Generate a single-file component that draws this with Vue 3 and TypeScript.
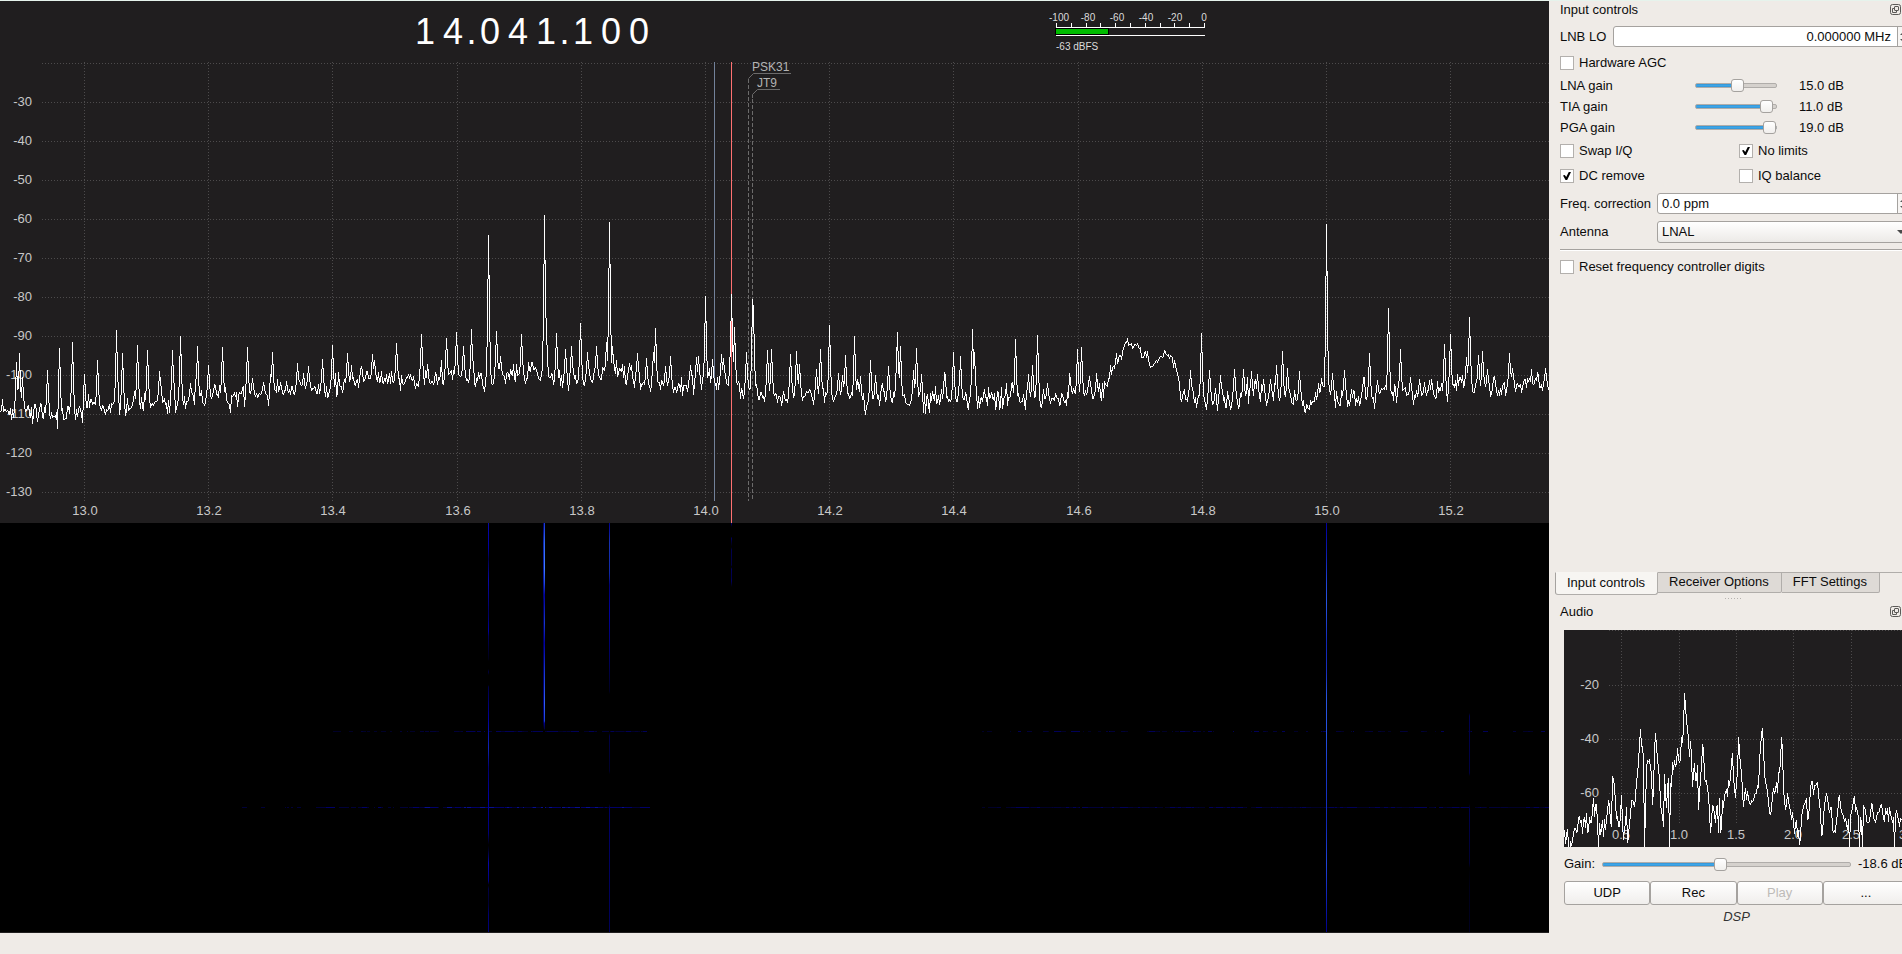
<script setup lang="ts">
import { ref } from 'vue'

type Point = [number, number]

const digits = '14.041.100'.split('')
const meterTicks = Array.from({ length: 11 }, (_, i) => Math.round(i * 14.8))
const meterLabels = [-100, -80, -60, -40, -20, 0]

/* Repeatable noise, so that the traces look the same on each load. */
function makeRandom(seed: number) {
  let s = seed
  return () => {
    s = (s * 1664525 + 1013904223) % 4294967296
    return s / 4294967296
  }
}

function interpolate(points: Point[], x: number): number {
  for (let i = 1; i < points.length; i++) {
    const [x1, y1] = points[i]
    if (x <= x1) {
      const [x0, y0] = points[i - 1]
      return y0 + ((x - x0) / (x1 - x0)) * (y1 - y0)
    }
  }
  return points[points.length - 1][1]
}

/* One vertical run per column, joining each sample to the next. */
function columns(ys: number[]): string {
  let path = ''
  for (let x = 0; x < ys.length; x++) {
    const previous = ys[x - 1] ?? ys[x]
    const next = ys[x + 1] ?? ys[x]
    const a = (previous + ys[x]) / 2
    const b = (next + ys[x]) / 2
    const top = Math.round(Math.min(a, b, ys[x]))
    const bottom = Math.max(top + 1, Math.round(Math.max(a, b, ys[x])))
    path += `M${x + 0.5} ${top}V${bottom}`
  }
  return path
}

const floorLine: Point[] = [
  [0, 632], [100, 640], [170, 650], [240, 636], [300, 622], [380, 622], [450, 608], [500, 608], [600, 602], [640, 588],
  [700, 590], [760, 584], [850, 578], [930, 570], [980, 574], [1020, 568], [1060, 542], [1200, 545], [1300, 540],
  [1380, 530], [1420, 550], [1520, 528], [1620, 530], [1650, 545], [1760, 540], [1850, 520], [1900, 530], [1930, 558],
  [2020, 565], [2080, 552], [2140, 555], [2190, 542], [2220, 575], [2270, 580], [2340, 590], [2420, 590], [2500, 588],
  [2550, 595], [2590, 612], [2650, 596], [2710, 600], [2770, 610], [2820, 600], [2900, 604], [3050, 604], [3220, 596],
  [3270, 575], [3320, 568], [3335, 500], [3360, 468], [3375, 432], [3400, 438], [3440, 460], [3450, 510], [3475, 475],
  [3490, 460], [3530, 500], [3540, 570], [3560, 598], [3650, 600], [3750, 594], [3850, 594], [3890, 604], [3955, 604],
  [3970, 588], [4010, 590], [4090, 598], [4190, 580], [4250, 594], [4310, 590], [4340, 580], [4360, 558], [4400, 558],
  [4470, 572], [4510, 572], [4540, 552], [4647, 558],
]

const peaks: Point[] = [
  [49, 487], [56, 460], [67, 530], [142, 511], [178, 445], [217, 427], [253, 522], [274, 598], [292, 481], [347, 391],
  [367, 460], [403, 574], [412, 436], [442, 451], [478, 514], [517, 451], [541, 409], [571, 550], [592, 439], [625, 496],
  [643, 553], [667, 442], [742, 442], [757, 535], [790, 547], [817, 457], [840, 547], [892, 490], [910, 520], [925, 499],
  [965, 478], [997, 436], [1040, 460], [1115, 463], [1123, 481], [1189, 430], [1264, 403], [1339, 415], [1369, 397],
  [1390, 439], [1414, 388], [1465, 105], [1489, 394], [1501, 469], [1564, 403], [1595, 487], [1633, 45], [1639, 394],
  [1669, 400], [1696, 448], [1714, 439], [1741, 370], [1762, 457], [1789, 439], [1819, 427], [1828, 67], [1837, 439],
  [1888, 490], [1912, 460], [1939, 475], [1960, 457], [1966, 385], [1996, 499], [2011, 469], [2071, 495], [2089, 472],
  [2095, 469], [2116, 289], [2137, 478], [2164, 463], [2170, 475], [2194, 283], [2203, 382], [2239, 457], [2255, 297],
  [2260, 334], [2302, 451], [2314, 448], [2371, 463], [2389, 454], [2398, 493], [2449, 508], [2461, 448], [2488, 376],
  [2515, 520], [2527, 526], [2536, 466], [2563, 409], [2572, 538], [2581, 529], [2611, 481], [2626, 526], [2647, 550],
  [2665, 499], [2687, 487], [2692, 397], [2701, 439], [2740, 511], [2749, 445], [2762, 523], [2833, 517], [2860, 457],
  [2881, 469], [2917, 388], [2923, 457], [3035, 547], [3046, 418], [3085, 523], [3097, 496], [3112, 406], [3142, 550],
  [3211, 544], [3232, 448], [3244, 442], [3268, 529], [3571, 511], [3604, 400], [3628, 511], [3661, 526], [3703, 508],
  [3730, 508], [3754, 514], [3772, 523], [3790, 538], [3811, 538], [3829, 496], [3847, 454], [3862, 505], [3898, 514],
  [3955, 550], [3964, 535], [3979, 72], [3997, 520], [4033, 511], [4090, 532], [4108, 460], [4132, 541], [4165, 325],
  [4201, 448], [4231, 532], [4258, 538], [4273, 547], [4294, 538], [4333, 433], [4351, 403], [4399, 472], [4408, 352],
  [4435, 466], [4447, 454], [4462, 508], [4483, 529], [4528, 460], [4537, 505], [4588, 535], [4605, 535], [4634, 505],
]

const dips: Point[] = [
  [112, 667], [172, 686], [247, 670], [376, 648], [508, 640], [526, 640], [691, 640], [2770, 640], [2788, 640], [3652, 632],
]

function buildSpectrum(): string {
  const random = makeRandom(41)
  const ys: number[] = []
  for (let x = 0; x < 1549; x++) {
    const onHump = x > 1110 && x < 1180
    const spread = onHump ? 26 : 38
    let offset = (random() + random() - 1) * spread
    if (!onHump && random() > 0.88) offset -= random() * 44
    ys.push(interpolate(floorLine, x * 3) + offset)
  }
  for (const [px, py] of peaks) {
    const x = Math.round(px / 3)
    const rise = interpolate(floorLine, px) - py
    for (const [dx, share] of [[-1, 0.4], [1, 0.45], [-2, 0.06], [2, 0.08]]) {
      if (ys[x + dx] !== undefined) ys[x + dx] = Math.min(ys[x + dx], py + rise * (1 - share))
    }
    ys[x] = py
  }
  for (const [px, py] of dips) ys[Math.round(px / 3)] = py
  return columns(ys.map((y) => 138 + y / 3))
}
const spectrum = buildSpectrum()

const levelLines = Array.from({ length: 12 }, (_, i) => ({ y: 1 + i * 39, label: -20 - i * 10 }))
const bandLines = Array.from({ length: 12 }, (_, i) => ({ x: 84 + Math.round(i * 124.2), label: (13 + i * 0.2).toFixed(1) }))

/* Audio envelope, also in thirds. */
const audioEnvelope: Point[] = [
  [0, 600], [13, 645], [28, 610], [48, 580], [78, 580], [96, 525], [99, 580], [101, 650], [104, 580], [123, 600],
  [131, 510], [140, 590], [145, 437], [153, 520], [163, 590], [172, 495], [176, 630], [185, 530], [190, 638], [196, 570],
  [203, 510], [210, 530], [215, 450], [220, 440], [228, 297], [236, 390], [239, 540], [241, 650], [243, 540], [245, 415],
  [256, 388], [260, 430], [263, 525], [274, 310], [283, 420], [290, 550], [296, 590], [299, 635], [301, 433], [306, 535],
  [313, 445], [316, 650], [319, 460], [331, 390], [336, 400], [340, 355], [346, 400], [351, 320], [355, 340], [361, 190],
  [368, 290], [373, 335], [376, 380], [379, 333], [385, 470], [389, 400], [394, 450], [398, 405], [403, 540], [410, 410],
  [415, 343], [421, 440], [428, 480], [436, 550], [439, 608], [445, 525], [452, 580], [458, 525], [461, 610], [466, 505],
  [469, 610], [475, 510], [488, 500], [498, 440], [504, 368], [508, 450], [514, 505], [523, 320], [528, 410], [538, 530],
  [544, 475], [558, 525], [573, 490], [583, 475], [588, 350], [595, 293], [600, 430], [608, 490], [618, 555], [628, 475],
  [638, 490], [646, 430], [652, 322], [657, 480], [663, 540], [668, 490], [678, 540], [688, 580], [696, 570], [698, 620],
  [708, 620], [711, 560], [725, 505], [728, 570], [742, 452], [748, 495], [755, 460], [763, 490], [773, 610], [780, 530],
  [787, 490], [793, 530], [813, 610], [823, 505], [833, 550], [846, 580], [854, 580], [856, 650], [859, 560], [871, 497],
  [878, 550], [883, 560], [886, 650], [889, 560], [893, 650], [898, 525], [913, 580], [923, 525], [933, 580], [950, 522],
  [958, 565], [978, 555], [988, 560], [991, 650], [994, 560], [1010, 570], [1020, 560], [1035, 570],
]

function buildAudio(): string {
  const random = makeRandom(7)
  const ys: number[] = []
  for (let x = 0; x < 345; x++) {
    const spread = x < 30 ? 60 : 40
    ys.push(interpolate(audioEnvelope, x * 3) + (random() + random() - 1) * spread)
  }
  for (const [px, py] of audioEnvelope) {
    const x = Math.round(px / 3)
    if (x < ys.length) ys[x] = py
  }
  return columns(ys.map((y) => y / 3))
}
const audioTrace = buildAudio()
const audioLevels = [{ y: 0, label: '' }, { y: 55, label: '-20' }, { y: 109, label: '-40' }, { y: 163, label: '-60' }]
const audioFreqs = [
  { x: 57, label: '0.5' }, { x: 115, label: '1.0' }, { x: 172, label: '1.5' },
  { x: 229, label: '2.0' }, { x: 287, label: '2.5' }, { x: 344, label: '3.0' },
]

/* Waterfall carriers: [y, colour] stops down each column. */
const carriers: { id: string; x: number; stops: [number, string][] }[] = [
  { id: 'c1', x: 488, stops: [[0, '#0808a8'], [25, '#0000a0'], [36, '#000050'], [57, '#0808a8'], [90, '#000060'], [108, '#0000a0'], [113, '#000058'], [136, '#000018'], [138, '#000'], [146, '#000'], [149, '#000040'], [152, '#000'], [162, '#000'], [164, '#000048'], [195, '#000098'], [225, '#1024b4'], [245, '#000070'], [275, '#0000a0'], [310, '#000078'], [322, '#000'], [328, '#000030'], [340, '#0808a8'], [358, '#000080'], [362, '#000'], [366, '#000048'], [380, '#000030'], [392, '#000070'], [409, '#000078']] },
  { id: 'c2a', x: 543, stops: [[0, '#000060'], [20, '#1028a8'], [55, '#0818a0'], [80, '#000058'], [130, '#000058'], [180, '#000078'], [198, '#000060'], [206, '#000']] },
  { id: 'c2', x: 544, stops: [[0, '#1838d0'], [20, '#3068f0'], [45, '#4080ff'], [60, '#2048e0'], [72, '#0000a0'], [100, '#1838c8'], [120, '#0000a0'], [150, '#1838d0'], [180, '#3060f0'], [198, '#1c40d8'], [200, '#000088'], [206, '#000040'], [207, '#000']] },
  { id: 'c3', x: 609, stops: [[0, '#000090'], [20, '#1830b0'], [50, '#1028a8'], [62, '#000070'], [90, '#0000a0'], [120, '#000070'], [140, '#000058'], [168, '#000020'], [171, '#000'], [210, '#000'], [213, '#000048'], [248, '#000028'], [251, '#000'], [281, '#000'], [285, '#000068'], [340, '#000060'], [409, '#000058']] },
  { id: 'c4', x: 731, stops: [[0, '#000078'], [4, '#000'], [14, '#000'], [15, '#000060'], [24, '#000'], [27, '#000050'], [42, '#000040'], [44, '#000'], [46, '#000060'], [54, '#000048'], [58, '#000060'], [64, '#000']] },
  { id: 'c5', x: 1326, stops: [[0, '#0000a0'], [30, '#0c1cb0'], [60, '#2044d8'], [80, '#2854e0'], [120, '#1028b8'], [150, '#1830c0'], [175, '#2854e0'], [210, '#2450e0'], [250, '#1838c8'], [300, '#1028b8'], [340, '#2044d8'], [380, '#0c1cb0'], [409, '#000088']] },
  { id: 'c6', x: 1469, stops: [[190, '#000'], [193, '#000050'], [250, '#000040'], [253, '#000'], [281, '#000'], [286, '#000050'], [340, '#000030'], [345, '#000'], [365, '#000018'], [409, '#000020']] },
]

/* Broadband bursts: short runs of varying brightness along one row. */
function burst(seed: number, from: number, to: number, density: number, full: number) {
  const random = makeRandom(seed)
  const paths = ['', '', '']
  for (let x = from; x < to; ) {
    const length = 1 + Math.floor(random() * 5)
    const strength = Math.min(1, (x - from + 20) / full)
    if (random() < density * strength) paths[Math.min(2, Math.floor(random() * 3 * strength))] += `M${x} 0h${length}`
    x += length
  }
  return paths
}
const strongBurst = ['#000038', '#000068', '#08108c']
const weakBurst = ['#000028', '#000038', '#000058']
const bursts = [
  { y: 208, colors: weakBurst, paths: burst(3, 290, 645, 0.8, 220) },
  { y: 208, colors: weakBurst, paths: burst(9, 982, 1549, 0.4, 60) },
  { y: 284, colors: strongBurst, paths: burst(5, 222, 647, 0.98, 260) },
  { y: 284, colors: weakBurst, paths: burst(12, 982, 1549, 0.94, 50) },
]

const gains = ref([
  { id: 'lna', name: 'LNA gain', value: 15, min: 0, max: 29 },
  { id: 'tia', name: 'TIA gain', value: 11, min: 0, max: 11.5 },
  { id: 'pga', name: 'PGA gain', value: 19, min: -12, max: 19 },
])
const audioGain = ref(-18.6)
const lnbLo = ref('0.000000 MHz')
const correction = ref('0.0 ppm')
const antenna = ref('LNAL')
const hardwareAgc = ref(false)
const flags = ref([
  { id: 'swap', name: 'Swap I/Q', on: false },
  { id: 'limits', name: 'No limits', on: true },
  { id: 'dc', name: 'DC remove', on: true },
  { id: 'iq', name: 'IQ balance', on: false },
])
const resetDigits = ref(false)
const tabs = ['Input controls', 'Receiver Options', 'FFT Settings']
const activeTab = ref(0)

function fill(value: number, min: number, max: number): string {
  return `${((value - min) / (max - min)) * 100}%`
}
</script>

<template>
  <div class="app">
    <div class="workspace">
      <main class="receiver">
        <header class="receiver-head">
          <div class="frequency">
            <span v-for="(d, i) in digits" :key="i" :class="d === '.' ? 'dot' : 'digit'">{{ d }}</span>
          </div>
          <svg class="meter" width="170" height="61" viewBox="-16 0 170 61" role="img" aria-label="Signal level">
            <g class="meter-text" text-anchor="middle">
              <text v-for="(l, i) in meterLabels" :key="l" :x="3 + i * 29" y="20">{{ l }}</text>
            </g>
            <g fill="#fff" shape-rendering="crispEdges">
              <rect v-for="t in meterTicks" :key="t" :x="t" y="22" width="1" height="4" />
              <rect x="0" y="26" width="149" height="1" />
              <rect x="0" y="34" width="149" height="1" />
              <rect x="-1" y="27" width="54" height="7" fill="#000" />
              <rect x="0" y="28" width="52" height="5" fill="#00bb00" />
            </g>
            <text class="meter-text" x="0" y="49">-63 dBFS</text>
          </svg>
        </header>

        <svg class="spectrum" viewBox="0 0 1549 461" role="img" aria-label="Spectrum">
          <g class="grid">
            <line v-for="l in levelLines" :key="l.y" x1="42" x2="1549" :y1="l.y + 0.5" :y2="l.y + 0.5" />
            <line v-for="b in bandLines" :key="b.x" :x1="b.x + 0.5" :x2="b.x + 0.5" y1="0" y2="439" />
          </g>
          <g class="axis" text-anchor="end">
            <text v-for="l in levelLines.slice(1)" :key="l.y" x="32" :y="l.y + 4">{{ l.label }}</text>
          </g>
          <g class="axis" text-anchor="middle">
            <text v-for="b in bandLines" :key="b.x" :x="b.x + 1" y="453">{{ b.label }}</text>
          </g>
          <g class="bookmark">
            <path d="M791 11.500H753.500L748.500 16.500" />
            <path d="M780 27.500H757.500L752.500 32.500V36" />
            <path d="M748.500 17V439M752.500 37V439" stroke-dasharray="4 2" />
            <text x="752" y="9">PSK31</text>
            <text x="757" y="25">JT9</text>
          </g>
          <rect x="714" y="0" width="1" height="439" fill="#73829a" />
          <rect x="731" y="0" width="1" height="461" fill="#ff7171" />
          <path class="trace" :d="spectrum" />
          <rect x="731" y="276" width="1" height="185" fill="#ff7171" />
        </svg>

        <svg class="waterfall" viewBox="0 0 1549 409" preserveAspectRatio="none" role="img" aria-label="Waterfall">
          <defs>
            <linearGradient
              v-for="c in carriers" :id="c.id" :key="c.id" gradientUnits="userSpaceOnUse"
              x1="0" y1="0" x2="0" y2="409"
            >
              <stop v-for="(s, i) in c.stops" :key="i" :offset="s[0] / 409" :stop-color="s[1]" />
            </linearGradient>
          </defs>
          <g v-for="(b, i) in bursts" :key="i" :transform="`translate(0 ${b.y + 0.5})`">
            <path v-for="(p, j) in b.paths" :key="j" :d="p" :stroke="b.colors[j]" />
          </g>
          <rect v-for="c in carriers" :key="c.id" :x="c.x" y="0" width="1" height="409" :fill="`url(#${c.id})`" />
        </svg>
      </main>

      <aside class="docks">
        <div class="docks-inner">
          <section class="dock">
            <header class="dock-title">
              <h2>Input controls</h2>
              <button class="float" aria-label="Float input controls">
                <svg width="11" height="11" viewBox="0 0 11 11">
                  <rect x=".5" y=".5" width="10" height="10" rx="2" />
                  <rect x="4.500" y="2.500" width="4" height="4" rx=".5" />
                  <path d="M4.500 4.500h-2v4h4v-2" />
                </svg>
              </button>
            </header>

            <div class="row lnb">
              <label for="lnb">LNB LO</label>
              <div class="spin">
                <input id="lnb" v-model="lnbLo" class="right" type="text" />
                <span class="arrows"><i class="up"></i><i class="down"></i></span>
              </div>
            </div>
            <label class="check agc"><input v-model="hardwareAgc" type="checkbox" />Hardware AGC</label>

            <div class="gains">
              <div v-for="g in gains" :key="g.id" class="gain-row">
                <label :for="g.id">{{ g.name }}</label>
                <input
                  :id="g.id" v-model.number="g.value" type="range" :min="g.min" :max="g.max" step="any"
                  :style="{ '--fill': fill(g.value, g.min, g.max) }"
                />
                <output :for="g.id">{{ g.value.toFixed(1) }} dB</output>
              </div>
            </div>

            <div class="flags">
              <label v-for="f in flags" :key="f.id" class="check"><input v-model="f.on" type="checkbox" />{{ f.name }}</label>
            </div>

            <div class="row form">
              <label for="ppm">Freq. correction</label>
              <div class="spin">
                <input id="ppm" v-model="correction" type="text" />
                <span class="arrows"><i class="up"></i><i class="down"></i></span>
              </div>
            </div>
            <div class="row form antenna">
              <label for="antenna">Antenna</label>
              <div class="combo">
                <select id="antenna" v-model="antenna">
                  <option>LNAL</option>
                  <option>LNAH</option>
                  <option>LNAW</option>
                </select>
                <i class="combo-arrow"></i>
              </div>
            </div>
            <hr />
            <label class="check reset"><input v-model="resetDigits" type="checkbox" />Reset frequency controller digits</label>
          </section>

          <nav class="tabs">
            <button
              v-for="(t, i) in tabs" :key="t" class="tab" :class="{ active: i === activeTab }"
              @click="activeTab = i"
            >{{ t }}</button>
          </nav>
          <div class="splitter"></div>

          <section class="dock audio">
            <header class="dock-title">
              <h2>Audio</h2>
              <button class="float" aria-label="Float audio">
                <svg width="11" height="11" viewBox="0 0 11 11">
                  <rect x=".5" y=".5" width="10" height="10" rx="2" />
                  <rect x="4.500" y="2.500" width="4" height="4" rx=".5" />
                  <path d="M4.500 4.500h-2v4h4v-2" />
                </svg>
              </button>
            </header>
            <div class="audio-body">
              <svg class="audio-plot" viewBox="0 0 345 217" role="img" aria-label="Audio spectrum">
                <g class="grid">
                  <line v-for="l in audioLevels" :key="l.y" x1="45" x2="345" :y1="l.y + 0.5" :y2="l.y + 0.5" />
                  <line v-for="f in audioFreqs" :key="f.x" :x1="f.x + 0.5" :x2="f.x + 0.5" y1="0" y2="193" />
                </g>
                <g class="axis" text-anchor="end">
                  <text v-for="l in audioLevels" :key="l.y" x="35" :y="l.y + 4">{{ l.label }}</text>
                </g>
                <g class="axis" text-anchor="middle">
                  <text v-for="f in audioFreqs" :key="f.x" :x="f.x" y="209">{{ f.label }}</text>
                </g>
                <path class="trace" :d="audioTrace" />
              </svg>
              <div class="audio-gain">
                <label for="again">Gain:</label>
                <input
                  id="again" v-model.number="audioGain" type="range" min="-80" max="50" step="any"
                  :style="{ '--fill': fill(audioGain, -80, 50) }"
                />
                <output for="again">{{ audioGain.toFixed(1) }} dB</output>
              </div>
              <div class="audio-buttons">
                <button>UDP</button>
                <button>Rec</button>
                <button disabled>Play</button>
                <button>...</button>
              </div>
              <p class="dsp">DSP</p>
            </div>
          </section>
        </div>
      </aside>
    </div>
  </div>
</template>

<style>
body {
  margin: 0;
  background: #efebe7;
}
</style>

<style scoped>
.app {
  box-sizing: border-box;
  display: flex;
  flex-direction: column;
  min-height: 100vh;
  padding-bottom: 21px;
  border-top: 1px solid #e6f3ec;
  background: #efebe7;
  color: #0c0c0c;
  font: 13px/16px "Liberation Sans", Arial, sans-serif;
}
.workspace {
  display: flex;
  flex: 1;
}
.receiver {
  display: flex;
  flex: 1;
  flex-direction: column;
  min-width: 0;
  border-bottom: 1px solid #201e1f;
  background: #201e1f;
}
.receiver-head {
  display: grid;
  grid-template-columns: 1040fr 509fr;
  height: 61px;
}
.frequency {
  display: flex;
  justify-content: center;
  padding-left: 24px;
  color: #fff;
  font-size: 36px;
  line-height: 61px;
}
.digit,
.dot {
  display: flex;
  justify-content: center;
  width: 28px;
}
.dot {
  width: 9px;
}
.meter {
  display: block;
}
.meter-text {
  fill: #dcdcdc;
  font-size: 10px;
}
.spectrum {
  display: block;
  width: 100%;
  height: auto;
  overflow: visible;
}
.grid line {
  stroke: #4d4b4c;
  stroke-dasharray: 1 2;
  shape-rendering: crispEdges;
}
.axis {
  fill: #c8c8c8;
  font-size: 13px;
}
.bookmark path {
  fill: none;
  stroke: #6c6b6b;
}
.bookmark text {
  fill: #b4b4b4;
  font-size: 12px;
}
.trace {
  fill: none;
  stroke: #fff;
  stroke-width: 1;
  shape-rendering: crispEdges;
}
.waterfall {
  display: block;
  flex: 1;
  width: 100%;
  min-height: 0;
  background: #000;
  shape-rendering: crispEdges;
}

.docks {
  flex: 0 0 353px;
  overflow: hidden;
}
.docks-inner {
  display: flex;
  flex-direction: column;
  box-sizing: border-box;
  width: 368px;
  height: 100%;
}
.dock {
  display: flex;
  flex: 1;
  flex-direction: column;
  padding: 0 8px 0 11px;
}
.dock-title {
  display: flex;
  justify-content: space-between;
  align-items: center;
  height: 17px;
  padding-right: 8px;
}
h2 {
  margin: 0;
  font-size: 13px;
  font-weight: 400;
}
.float {
  display: block;
  width: 11px;
  height: 11px;
  padding: 0;
  border: 0;
  background: none;
}
.float svg {
  display: block;
  fill: none;
  stroke: #5c5a58;
}
.row {
  display: flex;
  align-items: center;
  gap: 7px;
}
.lnb {
  margin-top: 8px;
}
.spin {
  display: flex;
  flex: 1;
  box-sizing: border-box;
  height: 21px;
  overflow: hidden;
  border: 1px solid #a5a29f;
  border-radius: 3px;
  background: #fff;
}
.spin input {
  flex: 1;
  box-sizing: border-box;
  min-width: 0;
  padding: 0 6px 0 4px;
  border: 0;
  outline: 0;
  background: none;
  color: inherit;
  font: inherit;
}
.spin .right {
  text-align: right;
}
.arrows {
  display: flex;
  flex-direction: column;
  align-items: center;
  justify-content: center;
  gap: 4px;
  width: 10px;
  border-left: 1px solid #a5a29f;
  background: #f7f5f3;
}
.arrows i {
  border: 3px solid transparent;
}
.arrows .up {
  border-top: 0;
  border-bottom-color: #555;
}
.arrows .down {
  border-bottom: 0;
  border-top-color: #555;
}
.check {
  display: flex;
  align-items: center;
  gap: 5px;
  height: 14px;
}
.check input {
  position: relative;
  flex: none;
  box-sizing: border-box;
  width: 14px;
  height: 14px;
  margin: 0;
  appearance: none;
  border: 1px solid #b3b0ad;
  background: #fff;
}
.check input:checked::after {
  position: absolute;
  inset: 2px;
  background: #000;
  clip-path: polygon(0 45%, 22% 38%, 40% 62%, 72% 0, 100% 0, 52% 100%, 32% 100%);
  content: "";
}
.agc {
  margin-top: 9px;
}
.gains {
  margin-top: 5px;
}
.gain-row {
  display: grid;
  grid-template-columns: 135px 82px 1fr;
  align-items: center;
  height: 21px;
}
.gain-row output {
  padding-left: 22px;
}
input[type="range"] {
  box-sizing: border-box;
  width: 100%;
  height: 13px;
  margin: 0;
  appearance: none;
  background: none;
}
input[type="range"]::-webkit-slider-runnable-track {
  box-sizing: border-box;
  height: 5px;
  border: 1px solid #b0adaa;
  border-radius: 2px;
  background: linear-gradient(#2479b3, #3da5e8 40%, #3da5e8 60%, #2479b3) 0 0 / var(--fill) 100% no-repeat border-box, #d5d1cd;
}
input[type="range"]::-webkit-slider-thumb {
  box-sizing: border-box;
  width: 13px;
  height: 13px;
  margin-top: -5px;
  appearance: none;
  border: 1px solid #a5a29f;
  border-radius: 3px;
  background: linear-gradient(#fff, #f1efed);
}
.flags {
  display: grid;
  grid-template-columns: 179px 1fr;
  row-gap: 11px;
  margin-top: 6px;
}
.form {
  margin-top: 10px;
}
.form > label {
  width: 90px;
  white-space: nowrap;
}
.antenna {
  margin-top: 7px;
}
.combo {
  position: relative;
  flex: 1;
}
select {
  display: block;
  box-sizing: border-box;
  width: 100%;
  height: 22px;
  padding: 0 4px;
  appearance: none;
  border: 1px solid #a5a29f;
  border-radius: 3px;
  background: linear-gradient(#fff, #eceae7);
  color: inherit;
  font: inherit;
}
.combo-arrow {
  position: absolute;
  top: 9px;
  right: 4px;
  border: 4px solid transparent;
  border-top-color: #4a4a4a;
  border-bottom: 0;
}
hr {
  width: 100%;
  height: 1px;
  margin: 6px 0 0;
  border: 0;
  border-bottom: 1px solid #fff;
  background: #a5a29f;
}
.reset {
  margin-top: 9px;
}
.tabs {
  display: flex;
  align-items: flex-start;
  margin-left: 6px;
}
.tab {
  box-sizing: border-box;
  height: 21px;
  padding: 0 12px 2px 11px;
  border: 1px solid #b0adaa;
  border-left: 0;
  border-radius: 0 0 2px 0;
  background: #dedad6;
  color: inherit;
  font: inherit;
}
.tab.active {
  height: 23px;
  border-top-color: transparent;
  border-left: 1px solid #a5a29f;
  border-radius: 0 0 3px 3px;
  background: #f7f5f2;
}
.tabs::after {
  flex: 1;
  height: 1px;
  background: #b0adaa;
  content: "";
}
.splitter {
  align-self: center;
  width: 17px;
  height: 1px;
  margin: 3px 0 4px;
  background: repeating-linear-gradient(90deg, #b5b2af 0 1px, transparent 1px 3px);
}
.dock.audio {
  flex: none;
}
.audio-body {
  padding: 10px 0 8px 4px;
}
.audio-plot {
  display: block;
  width: 100%;
  height: auto;
  background: #201e1f;
}
.audio-gain {
  display: flex;
  align-items: center;
  gap: 7px;
  height: 20px;
  margin-top: 7px;
}
.audio-gain label,
.audio-gain output {
  flex: none;
  white-space: nowrap;
}
.audio-gain output {
  width: 51px;
}
.audio-gain input {
  flex: 1;
  min-width: 0;
}
.audio-buttons {
  display: grid;
  grid-template-columns: repeat(4, 1fr);
  margin-top: 7px;
}
.audio-buttons button {
  height: 24px;
  padding: 0;
  border: 1px solid #a5a29f;
  border-radius: 3px;
  background: linear-gradient(#fff, #f0eeec);
  color: inherit;
  font: inherit;
}
.audio-buttons button:disabled {
  color: #bebbb8;
}
.dsp {
  margin: 4px 0 0;
  color: #333;
  font-style: italic;
  text-align: center;
}
</style>
